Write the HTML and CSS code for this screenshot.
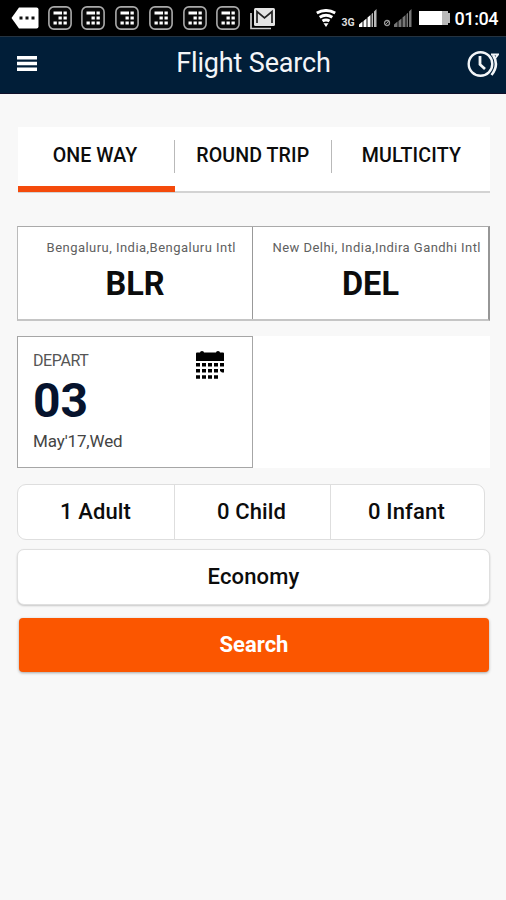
FILE: index.html
```
<!DOCTYPE html>
<html lang="en">
<head>
<meta charset="utf-8">
<title>Flight Search</title>
<link rel="stylesheet" href="styles.css">
</head>
<body>
<svg class="defs" aria-hidden="true">
  <symbol id="keypad" viewBox="0 0 24 24">
    <rect x=".9" y=".9" width="22.200" height="22.200" rx="5" fill="#080808" stroke="#aaa" stroke-width="1.600"/>
    <path d="M5.500 5.500H14v3H5.500zM15.500 5.500h3.300v3h-3.300zM10.500 10.500h3.300v3h-3.300zM15.500 10.500h3.300v3h-3.300zM5.500 15.500h3.300v3H5.500zM10.500 15.500h3.300v3h-3.300zM15.500 15.500h3.300v3h-3.300z" fill="#fff"/>
  </symbol>
</svg>
<div class="status">
  <svg class="more" viewBox="0 0 28 22"><path d="M8 .5h17.500q2 0 2 2v17q0 2-2 2H8L.5 11z" fill="#fff"/><path d="M8.500 9.500h3v3h-3zM14.500 9.500h3v3h-3zM20.500 9.500h3v3h-3z" fill="#111"/></svg>
  <div class="keypads">
    <svg><use href="#keypad"/></svg><svg><use href="#keypad"/></svg><svg><use href="#keypad"/></svg><svg><use href="#keypad"/></svg><svg><use href="#keypad"/></svg><svg><use href="#keypad"/></svg>
  </div>
  <svg class="mail" viewBox="0 0 26 22"><path d="M1 5v15.500h20" fill="none" stroke="#ccc" stroke-width="1.700"/><rect x="4" y="0" width="21" height="18" rx="1.500" fill="#e4e4e4"/><path d="M7 15V3.500l7.500 6.500L22 3.500V15" fill="none" stroke="#222" stroke-width="1.700"/></svg>
  <svg class="wifi" viewBox="0 0 20 18"><g fill="none" stroke="#fff" stroke-width="3"><path d="M.8 4Q10-1 19.200 4"/><path d="M3.700 8.300q6.300-4 12.600 0"/><path d="M6.500 12.100q3.500-2.200 7 0"/></g><path d="M7.500 14.200h5L10 18z" fill="#fff"/></svg>
  <span class="net">3G</span>
  <svg class="bars" viewBox="0 0 18 18"><path d="M0 18v-2.500l3.500-3V18zM4.500 18v-6l3-2.500V18zM8.500 18V8.500l3-2.500v12z" fill="#fff"/><path d="M12.500 18V5L14 3.700V18zM15 18V2.500L17.500 0v18z" fill="#b9b9b9"/></svg>
  <svg class="none" viewBox="0 0 8 9"><circle cx="4" cy="5" r="2.500" fill="none" stroke="#999" stroke-width="1.300"/><path d="M2 7L6 3" stroke="#999"/></svg>
  <svg class="bars dim" viewBox="0 0 18 18"><path d="M0 18v-2.500l3.500-3V18zM4.500 18v-6l3-2.500V18zM8.500 18V8.500l3-2.500v12zM12.500 18V5L14 3.700V18zM15 18V2.500L17.500 0v18z" fill="#777"/></svg>
  <svg class="battery" viewBox="0 0 31 14"><path d="M0 0h23v14H0z" fill="#fff"/><path d="M23 0h6v2h2v10h-2v2h-6z" fill="#b9b9b9"/></svg>
  <span class="time">01:04</span>
</div>
<header class="bar">
  <svg class="menu" viewBox="0 0 20 15"><path d="M0 0h20v3.500H0zM0 5.800h20v3.500H0zM0 11.500h20V15H0z" fill="#fff"/></svg>
  <h1>Flight Search</h1>
  <svg class="recent" viewBox="0 0 32 28"><g fill="none" stroke="#f2f5f8"><circle cx="13.500" cy="14" r="11.800" stroke-width="2.400"/><path d="M13 6v8.500l5 4.500" stroke-width="2.800"/><path d="M26 5Q32.500 15 24.500 25" stroke-width="2.600"/><path d="M24 4.500h7L28.500 8" stroke-width="1.800"/></g></svg>
</header>
<main>
  <nav class="tabs">
    <a class="active">ONE WAY</a>
    <a>ROUND TRIP</a>
    <a>MULTICITY</a>
  </nav>
  <section class="route">
    <div class="place"><small class="from">Bengaluru, India,Bengaluru Intl</small><b>BLR</b></div>
    <div class="place"><small class="to">New Delhi, India,Indira Gandhi Intl</small><b>DEL</b></div>
  </section>
  <section class="dates">
    <div class="depart">
      <div class="when"><span class="label">DEPART</span><strong>03</strong><span class="month">May'17,Wed</span></div>
      <svg class="calendar" viewBox="0 0 28 28"><path d="M0 10V2.500Q0 1.500 1 1.500h3Q4 0 6 0t2 1.500h12Q20 0 22 0t2 1.500h3q1 0 1 1V10z"/><path d="M0 12h4v3.500H0zM6 12h4v3.500H6zM12 12h4v3.500h-4zM18 12h4v3.500h-4zM24 12h4v3.500h-4zM0 18h4v3.500H0zM6 18h4v3.500H6zM12 18h4v3.500h-4zM18 18h4v3.500h-4zM24 18h4v3.500h-2l-2-1.500zM0 24.300h4v3.500H0zM6 24.300h4v3.500H6zM12 24.300h4v3.500h-4zM18 24.300h4v3.500h-4z"/></svg>
    </div>
  </section>
  <section class="people">
    <span>1 Adult</span><span>0 Child</span><span>0 Infant</span>
  </section>
  <button class="cabin">Economy</button>
  <button class="search">Search</button>
</main>
</body>
</html>
```

FILE: styles.css
```
* { box-sizing: border-box; }
body {
  margin: 0;
  min-height: 900px;
  background: #f8f8f8;
  color: #0c0c0c;
  font-family: Roboto, "Liberation Sans", sans-serif;
}
svg { display: block; flex: none; }
.defs { position: absolute; width: 0; height: 0; }

.status {
  display: flex;
  height: 36px;
  padding: 6px 0 0 11px;
  background: #000;
  color: #fff;
}
.more { width: 28px; height: 22px; margin-top: 1px; }
.keypads { display: flex; gap: 9.8px; margin-left: 8.5px; }
.keypads svg { width: 24px; height: 24px; }
.mail { width: 26px; height: 22px; margin: 2px 0 0 9.5px; }
.wifi { width: 20px; height: 18px; margin: 3px 0 0 40.5px; }
.net { width: 15px; margin: 11px 0 0 5px; font: bold 10.5px/12px Roboto, sans-serif; color: #ddd; }
.bars { width: 18px; height: 18px; margin: 3px 0 0 3px; }
.none { width: 8px; height: 9px; margin: 12px 0 0 6px; }
.battery { width: 31px; height: 14px; margin: 5px 0 0 6.5px; }
.time { margin: 1px 0 0 4.5px; font-size: 18px; line-height: 23px; font-weight: 500; white-space: nowrap; letter-spacing: -.4px; }

.bar {
  display: flex;
  align-items: center;
  height: 58px;
  padding: 0 7px 3px 17px;
  background: #011e38;
  border-top: 1px solid #253340;
  border-bottom: 1px solid #10102a;
  color: #f3f5f8;
}
.menu { width: 20px; height: 15px; }
h1 { flex: 1; margin: -1px 0 0; padding-left: 3px; font-size: 27px; line-height: 32px; font-weight: 400; text-align: center; letter-spacing: -.15px; }
.recent { width: 32px; height: 28px; }

main { padding: 33px 16px 0 17px; }
.tabs {
  display: grid;
  grid-template-columns: 157px 158px 1fr;
  height: 66px;
  margin-left: 1px;
  background: #fff;
  border-bottom: 2px solid #d3d3d3;
}
.tabs a {
  position: relative;
  padding: 16px 0 0;
  font-size: 19.6px;
  line-height: 26px;
  font-weight: 500;
  text-align: center;
  letter-spacing: .1px;
}
.tabs a:nth-child(2) { padding-right: 2.5px; }
.tabs a:nth-child(3) { letter-spacing: .2px; }
.tabs a:not(:last-child)::after {
  content: "";
  position: absolute;
  top: 13px;
  right: 0;
  width: 1.5px;
  height: 33px;
  background: #b9b9b9;
}
.tabs a:nth-child(2)::after { right: 1px; }
.tabs .active { height: 65px; padding-right: 3px; border-bottom: 6px solid #f44a0b; }

.route {
  display: grid;
  grid-template-columns: 235px 1fr;
  height: 95px;
  margin-top: 33px;
  background: #fff;
  border: 1px solid #aaa;
  border-width: 1px 2px 2px 1px;
  border-color: #aaa #969696 #c5c5c5 #bbb;
}
.place { padding: 13px 16px 0 0; }
.place:first-child { padding-left: 16px; border-right: 1px solid #999; }
.place:last-child { padding: 13px 0 0; }
.place small { display: block; text-align: right; white-space: nowrap; font-size: 13px; line-height: 16px; color: #606060; }
.place b { display: block; margin-top: 10px; font-size: 32.5px; line-height: 36px; font-weight: 700; text-align: center; }
.from { letter-spacing: .47px; }
.to { padding-right: 7px; letter-spacing: .46px; }

.dates { margin-top: 15px; height: 132px; background: #fff; }
.depart {
  display: flex;
  justify-content: space-between;
  width: 236px;
  height: 132px;
  padding: 14px 28px 0 15px;
  border: 1px solid #a6a6a6;
}
.when { display: flex; flex-direction: column; }
.label { font-size: 16px; line-height: 20px; color: #555; letter-spacing: -.4px; }
.when strong { margin-top: 5px; font-size: 48px; line-height: 50px; font-weight: 700; color: #06132d; }
.month { margin-top: 5px; font-size: 17px; line-height: 21px; color: #444; letter-spacing: -.15px; }
.calendar { width: 28px; height: 28px; }

.people {
  display: grid;
  grid-template-columns: 156px 156px 1fr;
  width: 468px;
  height: 56px;
  margin-top: 16px;
  border: 1px solid #dedede;
  border-radius: 9px;
  background: #fff;
  text-align: center;
  font-size: 22px;
  line-height: 54px;
  font-weight: 500;
  letter-spacing: .15px;
}
.people span { padding-right: 1px; }
.people span + span { padding-right: 2px; border-left: 1px solid #dedede; }

button {
  display: block;
  font-family: inherit;
  font-size: 22px;
  font-weight: 500;
  padding: 0 0 2px;
}
.cabin {
  width: 473px;
  height: 56px;
  margin-top: 9px;
  border: 1px solid #dfdfdf;
  border-radius: 7px;
  background: #fff;
  color: #0c0c0c;
  box-shadow: 0 1px 2px #0003;
  letter-spacing: .15px;
}
.search {
  width: 470px;
  height: 54px;
  margin: 13px 0 0 2px;
  border: 0;
  border-radius: 4px;
  background: #fb5600;
  color: #fff;
  font-weight: 700;
  box-shadow: 0 1px 3px #0005;
}
```
